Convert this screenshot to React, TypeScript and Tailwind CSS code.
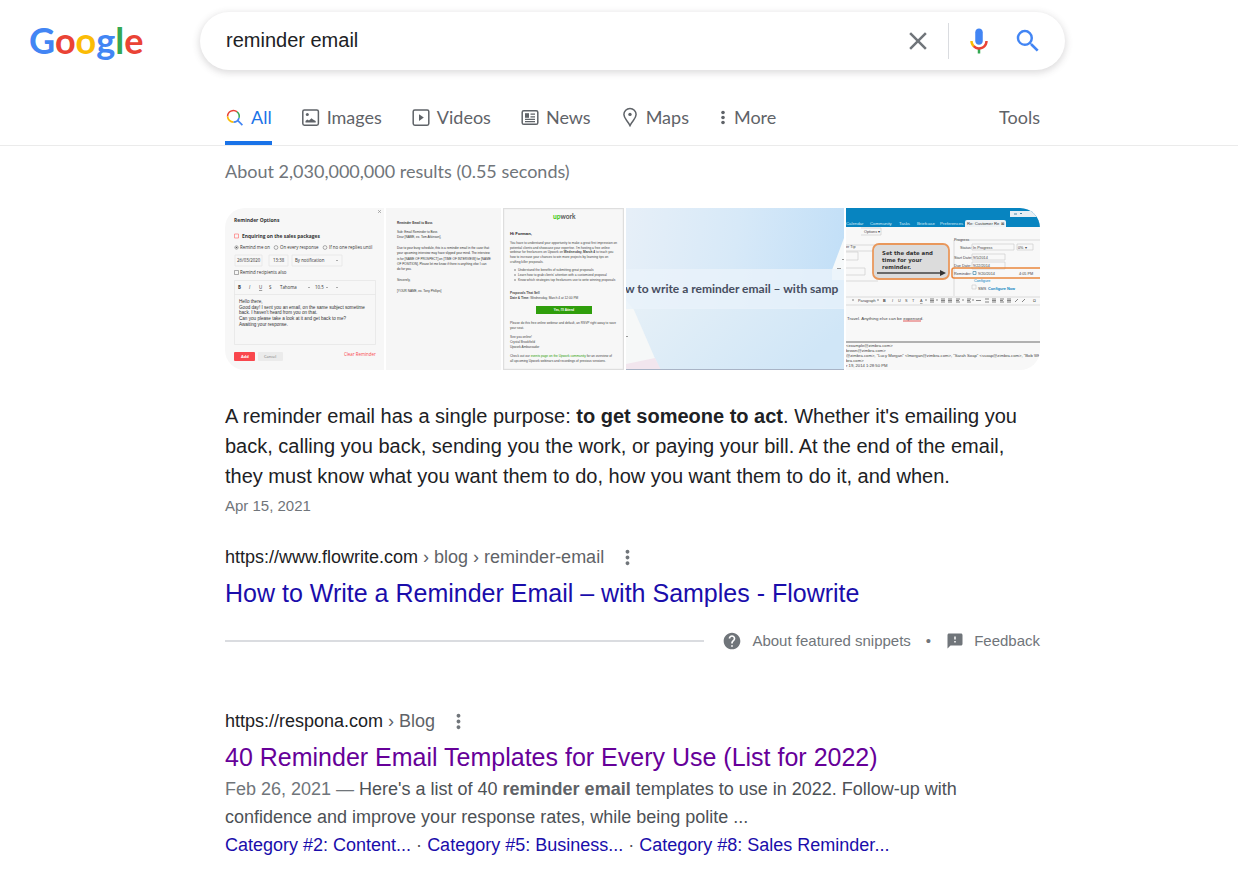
import { useState, type ReactNode } from "react";
import { MdClose, MdFeedback, MdHelp, MdMoreVert, MdSearch } from "react-icons/md";

const LOGO_LETTERS = [
  { char: "G", color: "#4285f4" },
  { char: "o", color: "#ea4335" },
  { char: "o", color: "#fbbc05" },
  { char: "g", color: "#4285f4" },
  { char: "l", color: "#34a853" },
  { char: "e", color: "#ea4335" },
];

function GoogleLogo() {
  return (
    <svg viewBox="0 0 130 56" className="h-14 w-[130px]" role="img" aria-label="Google">
      <text x="-1" y="41" fontFamily="Lato, sans-serif" fontSize="36" fontWeight="700">
        {LOGO_LETTERS.map((l, i) => (
          <tspan key={i} fill={l.color}>
            {l.char}
          </tspan>
        ))}
      </text>
    </svg>
  );
}

function MicIcon() {
  return (
    <svg viewBox="0 0 24 24" className="size-[30px]">
      <path
        fill="#4285f4"
        d="m12 15c1.66 0 3-1.31 3-2.97v-7.02c0-1.66-1.34-3.01-3-3.01s-3 1.34-3 3.01v7.02c0 1.66 1.34 2.97 3 2.97z"
      />
      <path fill="#34a853" d="m11 18.08h2v3.92h-2z" />
      <path
        fill="#fbbc05"
        d="m7.05 16.87c-1.27-1.33-2.05-2.83-2.05-4.87h2c0 1.45 0.56 2.42 1.47 3.38v0.32l-1.15 1.18z"
      />
      <path
        fill="#ea4335"
        d="m12 16.93a4.97 5.25 0 0 1 -3.54 -1.55l-1.41 1.49c1.26 1.34 3.02 2.13 4.95 2.13 3.87 0 6.99-2.92 6.99-7h-1.99c0 2.92-2.24 4.93-5 4.93z"
      />
    </svg>
  );
}

function TabIcon({ children }: { children: ReactNode }) {
  return (
    <svg viewBox="0 0 20 20" className="size-5 shrink-0" fill="none" stroke="#5f6368" strokeWidth="1.5">
      {children}
    </svg>
  );
}

const TABS = [
  {
    label: "All",
    icon: (
      <TabIcon>
        <path d="M2.6 9.5a5.8 5.8 0 0 1 9.5-4.6" stroke="#ea4335" />
        <path d="M12.1 4.900a5.8 5.8 0 0 1 1.9 6" stroke="#34a853" />
        <path d="M14 10.900a5.8 5.8 0 0 1-5.6 4.200M12.400 13.100l5 5" stroke="#4285f4" strokeWidth="1.7" />
        <path d="M8.4 15.1a5.8 5.8 0 0 1-5.8-5.6" stroke="#fbbc05" strokeWidth="1.7" />
      </TabIcon>
    ),
  },
  {
    label: "Images",
    icon: (
      <TabIcon>
        <rect x="1.8" y="3" width="15.6" height="15.2" rx="1.6" />
        <circle cx="6.3" cy="7.4" r="1.5" fill="#5f6368" stroke="none" />
        <path d="M4.500 15.500v-1.500l1.700-1.500 1.8 1.1 2.5-2.400 1.500 1.200 2.700 1.600v1.500z" fill="#5f6368" stroke="none" />
      </TabIcon>
    ),
  },
  {
    label: "Videos",
    icon: (
      <TabIcon>
        <rect x="2.2" y="3" width="15.6" height="15.2" rx="1.6" />
        <path d="M8 7.300v6.600l4.800-3.300z" fill="#5f6368" stroke="none" />
      </TabIcon>
    ),
  },
  {
    label: "News",
    icon: (
      <TabIcon>
        <rect x="2.2" y="3.700" width="15.6" height="13.600" rx="1.6" />
        <path d="M5 6.200h4v4.600H5z" fill="#5f6368" stroke="none" />
        <path d="M10.5 7.100H15M10.5 9.900H15M5 12.400h10M5 14.700h10" strokeWidth="1.3" />
      </TabIcon>
    ),
  },
  {
    label: "Maps",
    icon: (
      <TabIcon>
        <path d="M10 1.500a6.1 6.1 0 0 0-6.1 6.100c0 3.900 3.600 5.800 6.100 11 2.500-5.200 6.100-7.100 6.100-11A6.100 6.100 0 0 0 10 1.500z" />
        <circle cx="10" cy="7.400" r="1.700" fill="#5f6368" stroke="none" />
      </TabIcon>
    ),
  },
];

function ReminderOptionsThumb() {
  return (
    <svg viewBox="0 0 159 162" preserveAspectRatio="xMidYMid slice" className="h-[162px] w-full" fontFamily="Open Sans, sans-serif">
      <rect width="159" height="162" fill="#f7f7f7" />
      <path d="M153 2l3 3m0-3l-3 3" stroke="#888" strokeWidth="0.6" />
      <g fill="#333">
        <text x="9" y="14" fontSize="5" fontWeight="700">Reminder Options</text>
        <text x="17" y="30" fontSize="4.9" fontWeight="700">Enquiring on the sales packages</text>
        <g fontSize="4.4">
          <text x="15" y="41">Remind me on</text>
          <text x="55" y="41">On every response</text>
          <text x="104" y="41">If no one replies until</text>
          <text x="12" y="54">26/03/2020</text>
          <text x="48" y="54">13:38</text>
          <text x="70" y="54">By notification</text>
          <text x="15" y="66">Remind recipients also</text>
        </g>
        <g fontSize="4.4">
          <text x="13" y="81" fontWeight="700">B</text>
          <text x="24" y="81" fontStyle="italic">I</text>
          <text x="34" y="81" textDecoration="underline">U</text>
          <text x="44" y="81">S</text>
          <text x="55" y="81">Tahoma</text>
          <text x="90" y="81">10.5</text>
        </g>
        <g fontFamily="Liberation Sans, sans-serif" fontSize="4.6">
          <text x="14" y="95">Hello there,</text>
          <text x="14" y="101">Good day! I sent you an email, on the same subject sometime</text>
          <text x="14" y="106">back. I haven't heard from you on that.</text>
          <text x="14" y="112">Can you please take a look at it and get back to me?</text>
          <text x="14" y="118">Awaiting your response.</text>
        </g>
      </g>
      <g fill="none" stroke="#e6e6e6" strokeWidth="0.8">
        <path d="M10 47h27v11H10zM44 47h19v11H44zM67 47h50v11H67z" />
        <path d="M9.5 72.5h141v64h-141zM9.5 86.5h141" />
      </g>
      <g fill="none" stroke="#777" strokeWidth="0.6">
        <circle cx="11.5" cy="39.5" r="1.7" />
        <circle cx="51" cy="39.5" r="1.9" />
        <circle cx="100" cy="39.5" r="1.9" />
        <path d="M9.5 62.5h4v4h-4zM111 52l1 1 1-1M83 79l1 1 1-1M101 79l1 1 1-1M111 79l1 1 1-1" />
      </g>
      <circle cx="11.5" cy="39.5" r="0.8" fill="#555" />
      <path d="M9.5 26h4v4h-4z" fill="none" stroke="#f77" strokeWidth="0.7" />
      <rect x="9" y="144" width="21" height="9" rx="1" fill="#f9474d" />
      <rect x="33" y="144" width="25" height="9" rx="1" fill="#ebebeb" />
      <text x="16" y="150" fontSize="4" fontWeight="700" fill="#fff">Add</text>
      <text x="39" y="150" fontSize="4" fill="#777">Cancel</text>
      <text x="119" y="148" fontSize="4.4" fill="#f9474d">Clear Reminder</text>
    </svg>
  );
}

function BossEmailThumb() {
  return (
    <svg viewBox="0 0 115 162" preserveAspectRatio="xMidYMid slice" className="h-[162px] w-full" fontFamily="Liberation Sans, sans-serif">
      <rect width="115" height="162" fill="#f6f6f6" />
      <g fill="#333" fontSize="3.1">
        <text x="11" y="16" fontWeight="700">Reminder Email to Boss</text>
        <text x="11" y="25">Sub: Email Reminder to Boss</text>
        <text x="11" y="30">Dear [NAME, ex. Tom Atkinson],</text>
        <text x="11" y="41">Due to your busy schedule, this is a reminder email in the case that</text>
        <text x="11" y="46">your upcoming interview may have slipped your mind. The interview</text>
        <text x="11" y="52">is for [NAME OF PROSPECT] on [TIME OF INTERVIEW] for [NAME</text>
        <text x="11" y="57">OF POSITION]. Please let me know if there is anything else I can</text>
        <text x="11" y="62">do for you.</text>
        <text x="11" y="73">Sincerely,</text>
        <text x="11" y="84">[YOUR NAME, ex. Tony Phillips]</text>
      </g>
    </svg>
  );
}

function UpworkThumb() {
  return (
    <svg viewBox="0 0 121 162" preserveAspectRatio="xMidYMid slice" className="h-[162px] w-full" fontFamily="Liberation Sans, sans-serif">
      <rect width="121" height="162" fill="#f7f7f7" />
      <rect x="0.5" y="0.5" width="120" height="161" fill="none" stroke="#dedede" strokeWidth="1.4" />
      <text x="50" y="11" fontFamily="Lato, sans-serif" fontSize="6.6" fontWeight="700" fill="#555">
        <tspan fill="#37c80b">up</tspan>work
      </text>
      <text x="7" y="27" fontSize="4.2" fontWeight="700" fill="#222">Hi Forman,</text>
      <g fill="#444" fontSize="3.2">
        <text x="7" y="36">You have to understand your opportunity to make a great first impression on</text>
        <text x="7" y="41">potential clients and showcase your expertise. I'm hosting a free online</text>
        <text x="7" y="45">
          webinar for freelancers on Upwork on <tspan fontWeight="700">Wednesday, March 4</tspan> to teach you
        </text>
        <text x="7" y="50">how to increase your chances to win more projects by learning tips on</text>
        <text x="7" y="55">crafting killer proposals.</text>
        <text x="15" y="63">Understand the benefits of submitting great proposals</text>
        <text x="15" y="68">Learn how to grab clients' attention with a customized proposal</text>
        <text x="15" y="73">Know which strategies top freelancers use to write winning proposals</text>
        <text x="7" y="86" fontWeight="700">Proposals That Sell</text>
        <text x="7" y="91">
          <tspan fontWeight="700">Date &amp; Time:</tspan> Wednesday, March 4 at 12:00 PM
        </text>
        <text x="7" y="116">Please do this free online webinar and default, an RSVP right away to save</text>
        <text x="7" y="121">your seat.</text>
        <text x="7" y="130">See you online!</text>
        <text x="7" y="135">Crystal Brookfield</text>
        <text x="7" y="140">Upwork Ambassador</text>
        <text x="7" y="149">
          Check out our <tspan fill="#2c9d06">events page on the Upwork community</tspan> for an overview of
        </text>
        <text x="7" y="154">all upcoming Upwork webinars and recordings of previous sessions.</text>
      </g>
      <g fill="#555">
        <circle cx="12" cy="62" r="0.7" />
        <circle cx="12" cy="67" r="0.7" />
        <circle cx="12" cy="72" r="0.7" />
      </g>
      <rect x="33" y="98" width="56" height="8" fill="#2f9e0c" />
      <text x="61" y="103" fontSize="3" fontWeight="700" fill="#fff" textAnchor="middle">Yes, I'll Attend</text>
    </svg>
  );
}

function FlowriteThumb() {
  return (
    <svg viewBox="0 0 218 162" preserveAspectRatio="xMidYMid slice" className="h-[162px] w-full">
      <defs>
        <linearGradient id="sky" x1="0" y1="0.2" x2="1" y2="0.3">
          <stop offset="0" stopColor="#e6eff8" />
          <stop offset="0.5" stopColor="#d7e9f8" />
          <stop offset="1" stopColor="#c2dff7" />
        </linearGradient>
        <linearGradient id="lower" x1="0" y1="0" x2="1" y2="0.3">
          <stop offset="0" stopColor="#e6f0f7" />
          <stop offset="1" stopColor="#d0e6f7" />
        </linearGradient>
      </defs>
      <rect width="218" height="162" fill="url(#sky)" />
      <rect y="100" width="218" height="62" fill="url(#lower)" />
      <path d="M218 30L206 62v10h12z" fill="#f6f9fa" />
      <path d="M0 92l8 10 26 60H0z" fill="#f6f8f8" />
      <path d="M0 156l29-6 6 12H0z" fill="#f2e6ee" />
      <rect y="61" width="218" height="40" fill="#eaf3fa" fillOpacity="0.8" />
      <path d="M0 161.5h218" stroke="#a9b4c6" />
      <path d="M0 128.5h2M211 60.5h4M216 51.5h2" stroke="#999" />
      <text x="-1" y="85" fontFamily="Lato, sans-serif" fontSize="12" fontWeight="700" fill="#474e60">
        w to write a reminder email – with samp
      </text>
    </svg>
  );
}

function MailClientThumb() {
  return (
    <svg viewBox="0 0 194 162" preserveAspectRatio="xMidYMid slice" className="h-[162px] w-full" fontFamily="Liberation Sans, sans-serif">
      <rect width="194" height="162" fill="#f8f8f8" />
      <rect width="194" height="19" fill="#0784c0" />
      <rect x="164" y="3" width="30" height="6" fill="#e8eff4" />
      <path d="M168 6h3m3-1l1 1 1-1" stroke="#48a" />
      <path d="M119 19v-5q0-2 2-2h37q2 0 2 2v5z" fill="#eef2f5" />
      <g fontSize="4.3" fill="#d5ebf6">
        <text x="0" y="17">Calendar</text>
        <text x="24" y="17">Community</text>
        <text x="53" y="17">Tasks</text>
        <text x="71" y="17">Briefcase</text>
        <text x="94" y="17">Preferences</text>
      </g>
      <text x="121" y="17" fontSize="4.2" fill="#333">Re: Customer Re ⊠</text>
      <g fill="none" stroke="#cfcfcf" strokeWidth="0.7">
        <path d="M-1 37h100v6H-1M-1 44h13v8H-1M-1 60h20v7H-1M15 20h20v7H15M0 73h32" />
        <path d="M126 36h42v6h-42zM171 36h16v6h-16zM126 46h33v6h-33zM126 54h33v7h-33z" />
        <path d="M194 32h-86v56M0 89h194M0 97h194M126 77h4v4h-4z" />
      </g>
      <path d="M0 134h194" stroke="#9a9a9a" strokeWidth="1.5" />
      <g fontSize="3.8" fill="#444">
        <text x="0" y="40">er Tip</text>
        <text x="18" y="25">Options ▾</text>
        <text x="108" y="33">Progress</text>
        <text x="114" y="41">Status:</text>
        <text x="127" y="41">In Progress</text>
        <text x="172" y="41">0% ▾</text>
        <text x="108" y="51">Start Date:</text>
        <text x="127" y="51">9/5/2014</text>
        <text x="108" y="59">Due Date:</text>
        <text x="127" y="59">9/22/2014</text>
        <text x="108" y="67">Reminder:</text>
        <text x="132" y="67">9/20/2014</text>
        <text x="173" y="67">4:05 PM</text>
        <text x="128" y="74" fill="#0784c0">Configure</text>
        <text x="132" y="82">SMS</text>
        <text x="142" y="82" fontWeight="700" fill="#0784c0">Configure Now</text>
        <text x="12" y="94">Paragraph</text>
        <text x="37" y="94" fontWeight="700">B</text>
        <text x="46" y="94" fontStyle="italic">I</text>
        <text x="52" y="94">U</text>
        <text x="59" y="94">S</text>
        <text x="66" y="94">T</text>
        <text x="74" y="94" textDecoration="underline">A</text>
        <text x="187" y="94">Ω</text>
      </g>
      <path d="M127 63.5h3v3h-3z" fill="none" stroke="#48a" strokeWidth="0.7" />
      {/* editor toolbar buttons */}
      <g stroke="#555" strokeWidth="0.7">
        <path d="M6 92h2M31 92h2M79 92h2M90 92h2M116 92h2M126 92h2" />
        <path d="M84 91h4M84 92.5h4M84 94h4M95 91h4M95 92.5h4M95 94h4M102 91h4M102 92.500h4M102 94h4" />
        <path d="M110 91h4M110 92.5h3M110 94h4M121 91h4M121 92.5h3M121 94h4M130 92.5h5M139 91h4M139 94h4" />
        <path d="M146 91h4M146 92.5h4M146 94h4M154 91h4M154 92.5h3M154 94h4M161 91h4M161 92.5h4M161 94h4" />
        <path d="M169 94l3-3M176 94l3-3" />
      </g>
      <g fontSize="4.4" fill="#444">
        <text x="1" y="112">Travel. Anything else can be expensed.</text>
        <g fontSize="4.2">
          <text x="0" y="139">&lt;example@zimbra.com&gt;</text>
          <text x="0" y="144">brown@zimbra.com&gt;</text>
          <text x="0" y="149">@zimbra.com&gt;, "Lucy Morgan" &lt;lmorgan@zimbra.com&gt;, "Sarah Soap" &lt;ssoap@zimbra.com&gt;, "Bob White" &lt;</text>
          <text x="0" y="154">bra.com&gt;</text>
          <text x="0" y="159">r 19, 2014 1:28:50 PM</text>
        </g>
      </g>
      <path d="M57 113h18" stroke="#d33" strokeWidth="0.8" />
      <path d="M196 60h-88q-2 0-2 2v6q0 2 2 2h88" fill="none" stroke="#e9863c" strokeWidth="1.5" />
      <rect x="27" y="36" width="76" height="35" rx="6" fill="#dcdcdc" stroke="#e9985c" strokeWidth="1.8" />
      <g fontFamily="DejaVu Sans, sans-serif" fontSize="5.4" fontWeight="700" fill="#333">
        <text x="36" y="47">Set the date and</text>
        <text x="36" y="54">time for your</text>
        <text x="36" y="61">reminder.</text>
      </g>
      <path d="M31 65h64" stroke="#444" strokeWidth="1.5" />
      <path d="M94 62l6 3-6 3z" fill="#333" />
    </svg>
  );
}

function Breadcrumb({ site, path }: { site: string; path: string }) {
  return (
    <div className="flex h-6 items-center text-lg leading-6">
      <a href="#" className="text-[#202124]">
        {site}
        <span className="text-[#5f6368]"> {path}</span>
      </a>
      <button type="button" aria-label="About this result" className="ml-3 text-[#70757a]">
        <MdMoreVert className="size-[23px]" />
      </button>
    </div>
  );
}

export default function App() {
  const [query, setQuery] = useState("reminder email");

  return (
    <div className="min-h-screen bg-white pb-3 font-['Liberation_Sans',Arial,sans-serif] text-[#202124]">
      <header className="flex pt-3">
        <a href="#" className="flex w-[200px] shrink-0 items-center pl-[30px]">
          <GoogleLogo />
        </a>
        <form
          className="flex h-[58px] max-w-[865px] flex-1 items-center rounded-full bg-white pr-[22px] pl-[26px] shadow-[0_2px_7px_1px_rgba(64,60,67,0.18)]"
          onSubmit={(e) => e.preventDefault()}
        >
          <input
            type="text"
            aria-label="Search"
            className="min-w-0 flex-1 bg-transparent pb-0.5 text-xl outline-none"
            value={query}
            onChange={(e) => setQuery(e.target.value)}
          />
          <button type="button" aria-label="Clear" className="text-[#70757a]" onClick={() => setQuery("")}>
            <MdClose className="size-[30px]" />
          </button>
          <span className="ml-[15px] h-9 w-px bg-[#dadce0]" />
          <button type="button" aria-label="Search by voice" className="ml-[15px]">
            <MicIcon />
          </button>
          <button type="submit" aria-label="Google Search" className="ml-[19px] text-[#4285f4]">
            <MdSearch className="size-[30px]" />
          </button>
        </form>
      </header>

      <nav className="mt-[19px] border-b border-[#ebebeb] pl-[225px] font-[Lato,sans-serif] text-lg text-[#5f6368]">
        <div className="flex max-w-[815px] gap-[29px]">
          {TABS.map((tab, i) => (
            <a
              key={tab.label}
              href="#"
              className={`flex h-14 items-center gap-[6px] border-b-4 pt-1 ${
                i === 0 ? "border-[#1a73e8] text-[#1a73e8]" : "border-transparent"
              }`}
            >
              {tab.icon}
              {tab.label}
            </a>
          ))}
          <button type="button" className="flex h-14 items-center gap-[6px] border-b-4 border-transparent pt-1">
            <svg viewBox="0 0 10 20" className="h-5 w-2.5" fill="#5f6368">
              <circle cx="5" cy="5.5" r="1.8" />
              <circle cx="5" cy="10.5" r="1.8" />
              <circle cx="5" cy="15.5" r="1.8" />
            </svg>
            More
          </button>
          <button type="button" className="ml-auto h-14 border-b-4 border-transparent pt-1">
            Tools
          </button>
        </div>
      </nav>

      <main className="max-w-[1040px] pl-[225px]">
        <p className="pt-[13px] font-[Lato,sans-serif] text-lg leading-6 text-[#70757a]">
          About 2,030,000,000 results (0.55 seconds)
        </p>

        <section>
          <div className="mt-[25px] grid grid-cols-[159fr_115fr_121fr_218fr_194fr] gap-0.5 overflow-hidden rounded-[20px]">
            <ReminderOptionsThumb />
            <BossEmailThumb />
            <UpworkThumb />
            <FlowriteThumb />
            <MailClientThumb />
          </div>
          <p className="mt-[31px] text-xl leading-[30px]">
            A reminder email has a single purpose: <b>to get someone to act</b>. Whether it's emailing you back,
            calling you back, sending you the work, or paying your bill. At the end of the email, they must know
            what you want them to do, how you want them to do it, and when.
          </p>
          <p className="text-[15px] leading-[30px] text-[#70757a]">Apr 15, 2021</p>

          <div className="mt-6">
            <Breadcrumb site="https://www.flowrite.com" path="› blog › reminder-email" />
            <h3 className="mt-2 text-[25px] leading-8 text-[#1a0dab]">
              <a href="#">How to Write a Reminder Email – with Samples - Flowrite</a>
            </h3>
          </div>

          <div className="mt-5 flex items-center text-[15px] leading-6 text-[#70757a]">
            <span className="h-0.5 flex-1 bg-[#dadce0]" />
            <a href="#" className="ml-[18px] flex items-center gap-2.5">
              <MdHelp className="size-5" />
              About featured snippets
            </a>
            <span className="mx-[15px]">•</span>
            <a href="#" className="flex items-center gap-2.5">
              <MdFeedback className="size-[18px]" />
              Feedback
            </a>
          </div>
        </section>

        <section className="mt-14">
          <Breadcrumb site="https://respona.com" path="› Blog" />
          <h3 className="mt-2 text-[25px] leading-8 text-[#609]">
            <a href="#">40 Reminder Email Templates for Every Use (List for 2022)</a>
          </h3>
          <p className="mt-0.5 max-w-[750px] text-lg leading-7 text-[#4d5156]">
            <span className="text-[#70757a]">Feb 26, 2021 — </span>
            Here's a list of 40 <b className="text-[#5f6368]">reminder email</b> templates to use in 2022. Follow-up
            with confidence and improve your response rates, while being polite ...
          </p>
          <p className="text-lg leading-7 text-[#4d5156]">
            <a href="#" className="text-[#1a0dab]">Category #2: Content...</a> ·{" "}
            <a href="#" className="text-[#1a0dab]">Category #5: Business...</a> ·{" "}
            <a href="#" className="text-[#1a0dab]">Category #8: Sales Reminder...</a>
          </p>
        </section>
      </main>
    </div>
  );
}
